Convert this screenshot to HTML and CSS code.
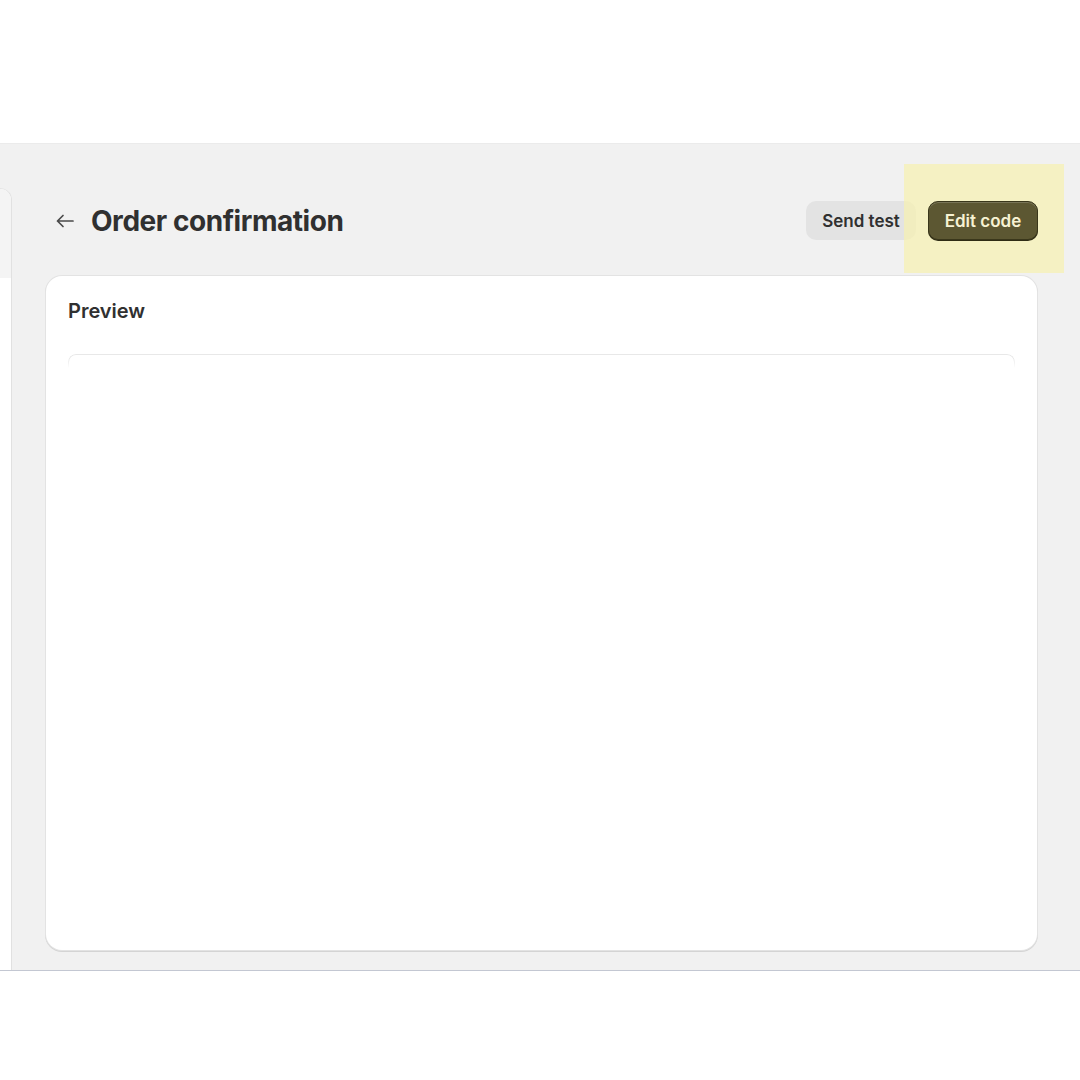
FILE: index.html
```html
<!DOCTYPE html>
<html lang="en">
<head>
<meta charset="utf-8">
<title>Order confirmation</title>
<link rel="stylesheet" href="styles.css">
</head>
<body>
<div class="top-space"></div>
<div class="app">
  <aside class="sidebar">
    <div class="sidebar-head"></div>
  </aside>
  <main class="main">
    <header class="page-header">
      <div class="title-group">
        <button class="back" aria-label="Back">
          <svg width="22" height="22" viewBox="0 0 22 22" fill="none" stroke="#4a4a4a" stroke-width="1.7" stroke-linecap="round" stroke-linejoin="round"><path d="M19 11H3.5M9 5.5 3.5 11 9 16.5"/></svg>
        </button>
        <h1 class="title">Order confirmation</h1>
      </div>
      <div class="actions">
        <button class="btn btn-secondary">Send test</button>
        <button class="btn btn-primary">Edit code</button>
        <span class="highlight"></span>
      </div>
    </header>
    <section class="card">
      <h2 class="card-title">Preview</h2>
      <div class="preview-frame"></div>
    </section>
  </main>
</div>
<div class="bottom-space"></div>
</body>
</html>
```
FILE: styles.css
```css
* { box-sizing: border-box; }
html, body { margin: 0; padding: 0; background: #ffffff; }
body { font-family: Inter, "Noto Sans", "Liberation Sans", sans-serif; color: #303030; }

.top-space { height: 143px; }
.bottom-space { height: 110px; }

.app {
  height: 828px;
  background: #f1f1f1;
  border-bottom: 1px solid #c3c7d2;
  border-top: 1px solid #ebebeb;
  display: flex;
  overflow: hidden;
}

.sidebar {
  width: 12px;
  margin-top: 44px;
  background: #ffffff;
  border-right: 1px solid #e1e1e1;
  border-top: 1px solid #e4e4e4;
  border-top-right-radius: 12px;
  flex-shrink: 0;
}
.sidebar-head {
  height: 89px;
  background: #f4f4f4;
  border-top-right-radius: 12px;
}

.main {
  flex: 1;
  padding: 57px 42px 0 34px;
  display: flex;
  flex-direction: column;
}

.page-header {
  display: flex;
  align-items: center;
  justify-content: space-between;
  height: 39px;
}
.title-group { display: flex; align-items: center; gap: 15px; padding-left: 8px; }
.back {
  border: 0; background: transparent; padding: 0; width: 22px; height: 22px;
  display: flex; align-items: center; justify-content: center;
}
.title {
  margin: 0;
  font-size: 28px;
  font-weight: 700;
  letter-spacing: -0.45px;
  color: #303030;
}

.actions { position: relative; display: flex; gap: 12px; align-items: center; }
.btn {
  font-family: inherit;
  font-size: 17px;
  font-weight: 600;
  height: 39px;
  width: 110px;
  border-radius: 10px;
  cursor: pointer;
}
.btn-secondary {
  background: #e3e3e3;
  border: 0;
  color: #303030;
}
.btn-primary {
  position: relative;
  z-index: 2;
  background: #5c5732;
  color: #f7f2d2;
  border: 1px solid #3a371b;
  box-shadow: inset 0 1px 0 rgba(255,255,255,0.18), 0 1px 0 #2f2c15;
}
.highlight {
  position: absolute;
  left: 98px;
  right: -26px;
  top: -37px;
  bottom: -33px;
  background: rgba(246, 241, 178, 0.72);
  z-index: 1;
  pointer-events: none;
}

.card {
  margin-top: 36px;
  height: 674px;
  margin-right: 1px;
  background: #ffffff;
  border-radius: 16px;
  box-shadow: 0 0 0 1px #e3e3e3, 0 1px 0 1px #d4d4d4;
  padding: 21px 22px 0 22px;
}
.card-title {
  margin: 0;
  font-size: 20px;
  font-weight: 600;
  color: #303030;
  line-height: 28px;
}
.preview-frame {
  margin-top: 29px;
  height: 14px;
  border: 1px solid #e8e8e8;
  border-bottom: 0;
  border-radius: 8px 8px 0 0;
  -webkit-mask-image: linear-gradient(#000 30%, transparent);
  mask-image: linear-gradient(#000 30%, transparent);
}
```
